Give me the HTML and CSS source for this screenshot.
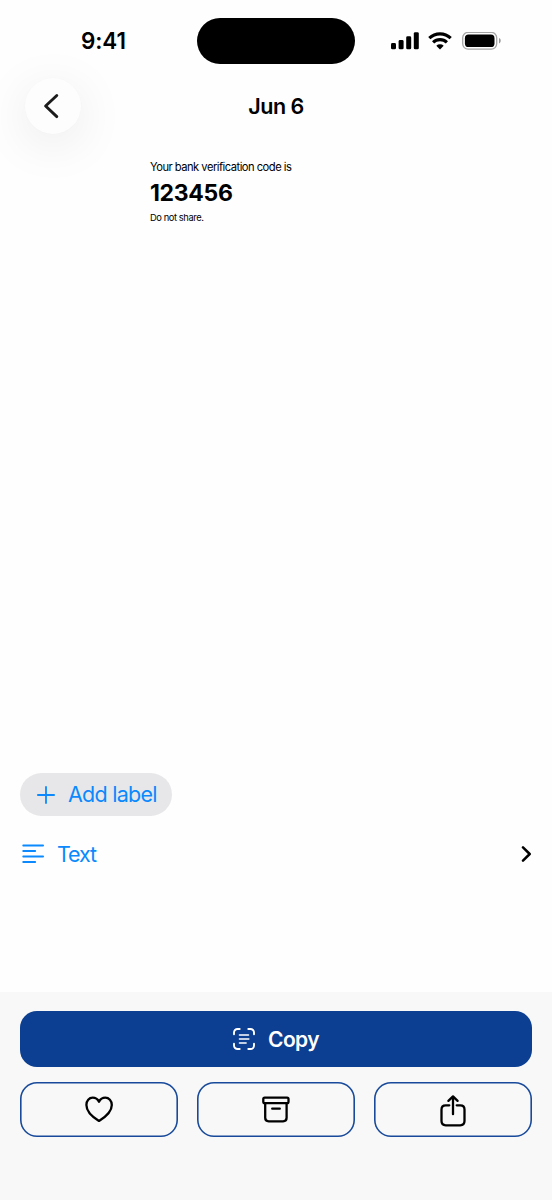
FILE: index.html
```
<!DOCTYPE html>
<html lang="en">
<head>
<meta charset="utf-8">
<title>Jun 6</title>
<link rel="stylesheet" href="styles.css">
</head>
<body>
<div class="screen">
  <div class="status">
    <div class="clock"><span class="time">9:41</span></div>
    <div class="island"></div>
    <div class="indicators">
      <svg width="28" height="18" viewBox="0 0 28 18"><rect x="0" y="11" width="5" height="6.3" rx="1.4"/><rect x="7.6" y="8" width="5" height="9.3" rx="1.4"/><rect x="15.2" y="4.3" width="5" height="13" rx="1.4"/><rect x="22.8" y="0.2" width="5" height="17.1" rx="1.4"/></svg>
      <svg class="wifi" width="24" height="18" viewBox="0 0 24 18"><path d="M1.3 6.2a15.3 15.3 0 0 1 21.4 0M5.1 10.4a9.9 9.9 0 0 1 13.8 0" fill="none" stroke="#000" stroke-width="3.1"/><path d="M8.3 13.8a5.4 5.4 0 0 1 7.4 0L12 17.6z"/></svg>
      <svg class="battery" width="39" height="19" viewBox="0 0 39 19"><rect x=".7" y=".4" width="34" height="16.8" rx="5.4" fill="none" stroke="#a4a4a4" stroke-width="1.3"/><rect x="2.9" y="2.6" width="29.6" height="12.4" rx="3.6"/><path d="M37 6.1c2.3.9 2.3 4.5 0 5.4z" fill="#999"/></svg>
    </div>
  </div>
  <header class="header">
    <button class="back" aria-label="Back"><svg width="56" height="56" viewBox="0 0 56 56"><path d="M31.8 17.5 20.6 28l11.2 10.6" fill="none" stroke="#1b1b1b" stroke-width="2.9" stroke-linecap="round" stroke-linejoin="round"/></svg></button>
    <h1 class="title">Jun 6</h1>
  </header>
  <main class="message">
    <p class="intro">Your bank verification code is</p>
    <p class="code">123456</p>
    <p class="warning">Do not share.</p>
  </main>
  <section class="details">
    <button class="chip">
      <svg width="18" height="18" viewBox="0 0 18 18"><path d="M9 .9v16.2M.9 9h16.2" stroke="currentColor" stroke-width="1.8" stroke-linecap="round"/></svg>
      <span class="chip-label">Add label</span>
    </button>
    <div class="row">
      <svg width="22" height="20" viewBox="0 0 22 20"><path d="M1.2 1.5h19.9M1.2 7h12M1.2 12.5h19.9M1.2 18h12" stroke="currentColor" stroke-width="1.8" stroke-linecap="round"/></svg>
      <span class="row-label">Text</span>
      <svg class="chevron" width="12" height="16" viewBox="0 0 12 16"><path d="m3 1.4 6.7 6.6L3 14.6" fill="none" stroke="#000" stroke-width="2.5" stroke-linecap="round" stroke-linejoin="round"/></svg>
    </div>
  </section>
  <footer class="actions">
    <button class="copy">
      <svg width="22" height="22" viewBox="0 0 22 22" fill="none" stroke="#fff" stroke-width="1.9" stroke-linecap="round"><path d="M1 6.2V4.5A3.5 3.5 0 0 1 4.5 1h2.2M15.3 1h2.2A3.5 3.5 0 0 1 21 4.5v1.7M1 15.8v1.7A3.5 3.5 0 0 0 4.5 21h2.2M15.3 21h2.2a3.5 3.5 0 0 0 3.5-3.5v-1.7"/><path d="M6.5 7h9M6.5 11h9.3M6.5 15h6.6" stroke-width="1.6"/></svg>
      <span class="copy-label">Copy</span>
    </button>
    <div class="tools">
      <button class="tool" aria-label="Favorite"><svg width="158" height="56" viewBox="0 0 158 56"><path d="M79 39.9C72.5 35.9 66.4 30.6 66.4 23.9c0-4.2 2.7-7.2 6.3-7.2 2.8 0 5 1.5 6.3 4 1.3-2.5 3.5-4 6.3-4 3.6 0 6.5 3 6.5 7.2C91.8 30.6 85.5 35.9 79 39.9z"/></svg></button>
      <button class="tool" aria-label="Archive"><svg width="158" height="56" viewBox="0 0 158 56"><rect x="66.3" y="16.7" width="25.2" height="5.4" rx="1.4"/><path d="M68.2 22.2v14.6q0 3.5 3.5 3.5h14.4q3.5 0 3.5-3.5V22.2M75.2 27.7h7.6"/></svg></button>
      <button class="tool" aria-label="Share"><svg width="158" height="56" viewBox="0 0 158 56"><path d="M75.3 24.3h-3.6q-4.2 0-4.2 4.2v11.6q0 4.2 4.2 4.2h14.6q4.2 0 4.2-4.2V28.5q0-4.2-4.2-4.2h-3.6"/><path d="M79 33.2V15.6M74.4 19.9l4.6-4.5 4.6 4.5"/></svg></button>
    </div>
  </footer>
</div>
</body>
</html>
```

FILE: styles.css
```
* { box-sizing: border-box; }
body { margin: 0; background: #fff; color: #000; font-family: Inter, "Liberation Sans", sans-serif; }
button { margin: 0; padding: 0; border: 0; background: none; font: inherit; color: inherit; }
svg { display: block; flex: none; }
p, h1 { margin: 0; white-space: nowrap; }
.screen { display: flex; flex-direction: column; width: 552px; height: 1200px; overflow: hidden; background: #fefefe; }
.status { display: grid; grid-template-columns: 197px 158px 197px; height: 64px; padding-top: 18px; }
.clock { padding: 9px 0 0 81px; line-height: 28px; }
.time { font-size: 22.5px; font-weight: 600; letter-spacing: -0.1px; }
.island { height: 46px; border-radius: 23px; background: #000; }
.indicators { display: flex; padding: 14px 0 0 36px; }
.wifi { margin-left: 9px; }
.battery { margin-left: 10px; }
.header { display: grid; grid-template-columns: 56px 1fr 56px; align-items: center; height: 70px; padding: 14px 25px 0; }
.back { width: 56px; height: 56px; border-radius: 50%; background: #fdfdfd; box-shadow: 0 10px 50px rgba(0, 0, 0, 0.085), 0 0 2px rgba(0, 0, 0, 0.02); }
.title { text-align: center; font-size: 21.5px; font-weight: 600; letter-spacing: -0.5px; line-height: 28px; }
.message { padding: 25px 0 0 150px; }
.intro { font-size: 11.2px; line-height: 16px; letter-spacing: -0.52px; }
.code { margin-top: 3px; font-size: 23px; font-weight: 700; line-height: 30px; letter-spacing: -0.3px; }
.warning { margin-top: 4px; font-size: 9.3px; line-height: 12px; letter-spacing: -0.4px; }
.details { margin-top: auto; height: 219px; padding: 0 20px; color: #0b89fd; font-size: 21.5px; }
.chip { display: flex; align-items: center; width: 152px; height: 43px; padding-left: 17px; border-radius: 22px; background: #e7e7e9; }
.chip-label { position: relative; top: -1px; margin-left: 13px; white-space: nowrap; letter-spacing: -0.75px; }
.row { display: flex; align-items: center; height: 30px; margin-top: 23px; padding-left: 2px; }
.row-label { margin-left: 13px; letter-spacing: -1.1px; }
.chevron { margin-left: auto; }
.actions { height: 208px; padding: 19px 20px 0; background: #f7f8f7; }
.copy { display: flex; align-items: center; justify-content: center; gap: 13px; width: 512px; height: 56px; border-radius: 17px; background: #0c3e91; color: #fff; font-size: 21px; font-weight: 600; }
.copy-label { letter-spacing: -0.6px; }
.tools { display: grid; grid-template-columns: repeat(3, 158px); gap: 19px; margin-top: 15px; }
.tool { height: 55px; border-radius: 17px; box-shadow: inset 0 0 0 1.6px #18499a; }
.tool svg { margin-top: -1px; fill: none; stroke: #000; stroke-width: 2.3; stroke-linecap: round; stroke-linejoin: round; }
```
